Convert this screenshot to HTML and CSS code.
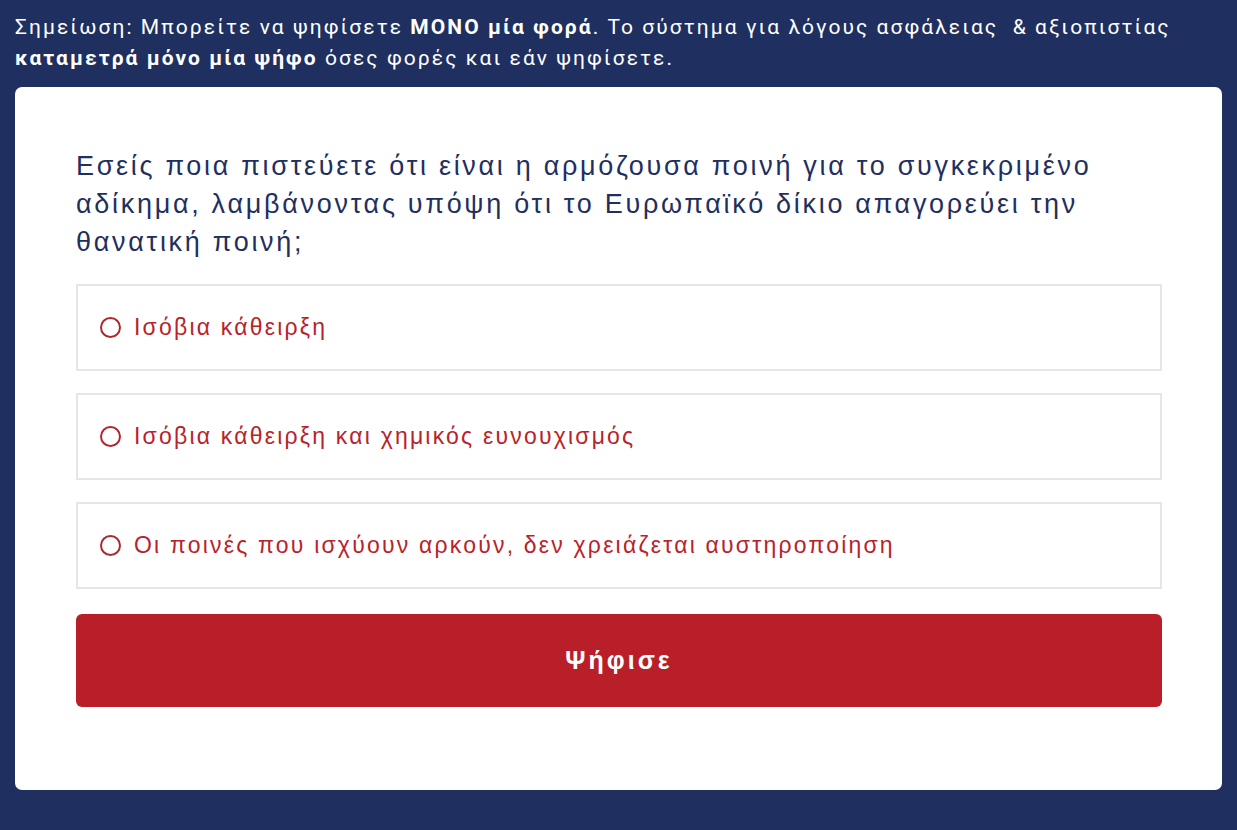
FILE: index.html
```html
<!DOCTYPE html>
<html lang="el">
<head>
  <meta charset="UTF-8">
  <title>Ψηφοφορία</title>
  <link rel="stylesheet" href="styles.css">
</head>
<body>

  <p class="note">Σημείωση: Μπορείτε να ψηφίσετε <b>ΜΟΝΟ μία φορά</b>. Το σύστημα για λόγους ασφάλειας &nbsp;&amp; αξιοπιστίας <b>καταμετρά μόνο μία ψήφο</b> όσες φορές και εάν ψηφίσετε.</p>

  <form class="poll">
    <h2 class="question">Εσείς ποια πιστεύετε ότι είναι η αρμόζουσα ποινή για το συγκεκριμένο αδίκημα, λαμβάνοντας υπόψη ότι το Ευρωπαϊκό δίκιο απαγορεύει την θανατική ποινή;</h2>

    <label class="option">
      <input type="radio" name="vote" value="1">
      <span class="radio"></span>
      Ισόβια κάθειρξη
    </label>
    <label class="option">
      <input type="radio" name="vote" value="2">
      <span class="radio"></span>
      Ισόβια κάθειρξη και χημικός ευνουχισμός
    </label>
    <label class="option">
      <input type="radio" name="vote" value="3">
      <span class="radio"></span>
      Οι ποινές που ισχύουν αρκούν, δεν χρειάζεται αυστηροποίηση
    </label>

    <button type="submit">Ψήφισε</button>
  </form>

</body>
</html>
```

FILE: styles.css
```css
body {
  margin: 0;
  padding: 12px 15px 41px;
  background: #1f3060;
  font-family: "Liberation Sans", Arial, sans-serif;
}

.note {
  margin: 0 0 13px;
  font-family: Roboto, "Liberation Sans", sans-serif;
  font-size: 21px;
  line-height: 31px;
  letter-spacing: 2.05px;
  color: #ffffff;
}

.poll {
  background: white;
  border-radius: 7px;
  padding: 60px 60px 83px 61px;
}

.question {
  margin: 0 0 23px;
  font-size: 27px;
  font-weight: normal;
  line-height: 38px;
  color: #1f3060;
  letter-spacing: 2.7px;
}

.option {
  display: flex;
  align-items: center;
  gap: 13px;
  height: 87px;
  box-sizing: border-box;
  padding: 0 22px;
  margin-bottom: 22px;
  border: 2px solid #e6e6e6;
  font-size: 23px;
  letter-spacing: 2.2px;
  color: #b8232b;
  cursor: pointer;
}

.option input {
  display: none;
}

.radio {
  width: 17px;
  height: 17px;
  border: 2px solid #b0262e;
  border-radius: 50%;
  flex-shrink: 0;
}

.option input:checked + .radio {
  background: radial-gradient(#b8232b 45%, transparent 50%);
}

button {
  display: block;
  width: 100%;
  height: 93px;
  margin-top: 25px;
  background-color: #b91f28;
  color: white;
  border: none;
  border-radius: 6px;
  font-family: "Liberation Sans", Arial, sans-serif;
  font-size: 25px;
  font-weight: bold;
  letter-spacing: 3px;
  cursor: pointer;
}
```
